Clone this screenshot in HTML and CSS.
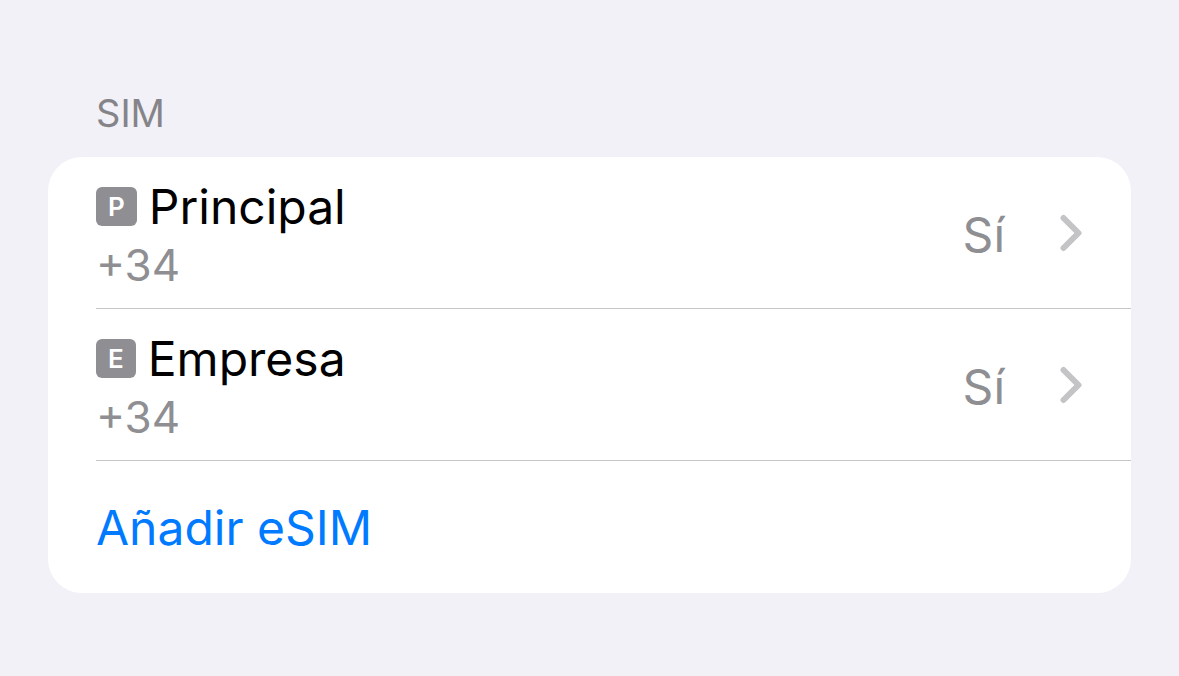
FILE: index.html
```html
<!DOCTYPE html>
<html lang="es">
<head>
<meta charset="utf-8">
<title>SIM</title>
<link rel="stylesheet" href="styles.css">
</head>
<body>
<main class="settings">
  <h2 class="group-title">SIM</h2>
  <ul class="group">
    <li class="item">
      <button class="row" type="button">
        <span class="line">
          <span class="name"><span class="badge">P</span>Principal</span>
          <span class="number">+34</span>
        </span>
        <span class="state">Sí</span>
        <svg class="chevron" viewBox="0 0 24 38" aria-hidden="true"><path d="M4.500 4L19.500 19L4.500 34"/></svg>
      </button>
    </li>
    <li class="item">
      <button class="row" type="button">
        <span class="line">
          <span class="name"><span class="badge">E</span>Empresa</span>
          <span class="number">+34</span>
        </span>
        <span class="state">Sí</span>
        <svg class="chevron" viewBox="0 0 24 38" aria-hidden="true"><path d="M4.500 4L19.500 19L4.500 34"/></svg>
      </button>
    </li>
    <li class="item">
      <button class="row add" type="button">Añadir eSIM</button>
    </li>
  </ul>
</main>
</body>
</html>
```
FILE: styles.css
```css
* { box-sizing: border-box; }
body {
  margin: 0;
  background: #f2f1f8;
  color: #000;
  font-family: Inter, "Liberation Sans", sans-serif;
}
.settings { padding: 89px 48px 48px; }
.group-title {
  margin: 0;
  padding: 0 48px 20px;
  color: #858489;
  font-size: 38px;
  line-height: 48px;
  font-weight: 400;
}
.group {
  margin: 0;
  padding: 0 0 0 48px;
  list-style: none;
  background: #fff;
  border-radius: 34px;
}
.item + .item { border-top: 1px solid #c6c6c8; }
.row {
  display: flex;
  align-items: center;
  width: 100%;
  padding: 20px 48px 15px 0;
  border: 0;
  background: none;
  color: inherit;
  font: inherit;
  text-align: left;
}
.line { flex: 1; }
.name {
  display: flex;
  align-items: center;
  gap: 12px;
  font-size: 48px;
  line-height: 60px;
}
.badge {
  margin-bottom: 2px;
  padding: 0 12px;
  border-radius: 6px;
  background: #8e8e93;
  color: #fff;
  font-size: 26px;
  line-height: 39px;
  font-weight: 600;
}
.number {
  display: block;
  color: #8e8e93;
  font-size: 44px;
  line-height: 56px;
}
.state {
  color: #8e8e93;
  font-size: 48px;
  line-height: 60px;
}
.chevron {
  width: 24px;
  height: 38px;
  margin: 0 0 4px 54px;
  fill: none;
  stroke: #c4c4c6;
  stroke-width: 6;
  stroke-linecap: round;
  stroke-linejoin: round;
}
.add {
  padding: 37px 48px 35px 0;
  color: #007aff;
  font-size: 48px;
  line-height: 60px;
}
```
